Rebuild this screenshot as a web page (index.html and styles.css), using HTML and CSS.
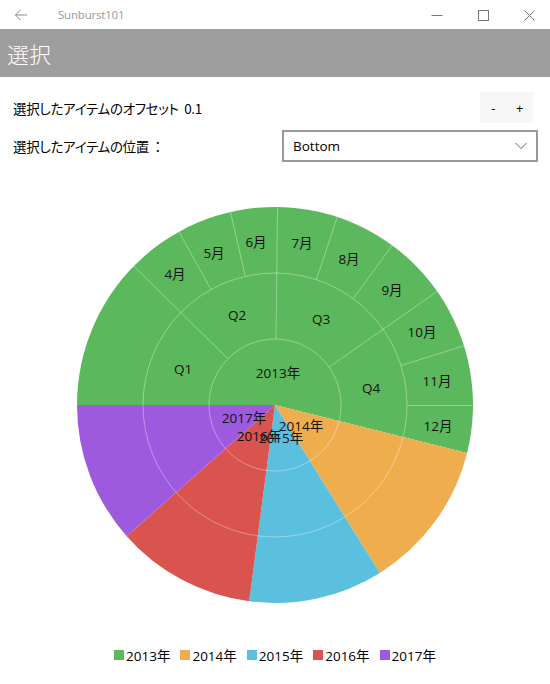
FILE: index.html
```html
<!DOCTYPE html>
<html lang="ja">
<head>
<meta charset="utf-8">
<title>Sunburst101</title>
<link rel="stylesheet" href="styles.css">
</head>
<body>
<div class="app">
  <div class="titlebar">
    <svg class="tb-back" width="14" height="12" viewBox="0 0 14 12"><path d="M13 6H1.5M6.5 1 1.5 6l5 5" fill="none" stroke="#8a8a8a" stroke-width="1"/></svg>
    <span class="tb-title">Sunburst101</span>
    <div class="tb-controls">
      <svg width="12" height="12" viewBox="0 0 12 12"><path d="M0.5 6.5h11" stroke="#777" stroke-width="1"/></svg>
      <svg width="12" height="12" viewBox="0 0 12 12"><rect x="1.5" y="1.5" width="10" height="10" fill="none" stroke="#777" stroke-width="1"/></svg>
      <svg width="12" height="12" viewBox="0 0 12 12"><path d="M1.5 1.5l10 10M11.5 1.5l-10 10" stroke="#777" stroke-width="1"/></svg>
    </div>
  </div>
  <div class="header">選択</div>
  <div class="options">
    <div class="row row-offset">
      <span class="label">選択したアイテムのオフセット&nbsp;&nbsp;0.1</span>
      <div class="stepper"><button class="step">-</button><button class="step">+</button></div>
    </div>
    <div class="row row-pos">
      <span class="label">選択したアイテムの位置<span class="colon">：</span></span>
      <div class="combo">
        <span class="combo-text">Bottom</span>
        <svg class="combo-chev" width="12" height="8" viewBox="0 0 12 8"><path d="M0.5 1 6 6.5 11.5 1" fill="none" stroke="#666" stroke-width="1"/></svg>
      </div>
    </div>
  </div>
  <div class="chart">
    <svg width="550" height="483" viewBox="0 0 550 483">
      <g transform="translate(275 243)">
        <path d="M0 0L-198 0A198 198 0 1 1 192.1 47.9Z" fill="#5cb85c"/>
        <path d="M0 0L192.1 47.9A198 198 0 0 1 104.9 167.9Z" fill="#f0ad4e"/>
        <path d="M0 0L104.9 167.9A198 198 0 0 1 -25.8 196.3Z" fill="#5bc0de"/>
        <path d="M0 0L-25.8 196.3A198 198 0 0 1 -148.3 131.2Z" fill="#d9534f"/>
        <path d="M0 0L-148.3 131.2A198 198 0 0 1 -198 0Z" fill="#9d5ade"/>
        <g class="seps">
          <circle r="66" fill="none"/>
          <circle r="132" fill="none"/>
          <path d="M-47.1 -46.3L-141.2 -138.8"/>
          <path d="M-64 -115.4L-96 -173.2"/>
          <path d="M-29.7 -128.6L-44.5 -192.9"/>
          <path d="M1 -66L2.5 -198"/>
          <path d="M41.4 -125.3L62.2 -188"/>
          <path d="M78.1 -106.4L117.2 -159.6"/>
          <path d="M54.1 -37.9L162.2 -113.6"/>
          <path d="M126 -39.5L188.9 -59.2"/>
          <path d="M132 0.5L197 0.5"/>
        </g>
        <g class="lbl">
          <text x="3" y="-32">2013年</text>
          <text x="-92" y="-36">Q1</text>
          <text x="-38" y="-90">Q2</text>
          <text x="46" y="-86">Q3</text>
          <text x="96" y="-17">Q4</text>
          <text x="-100" y="-131">4月</text>
          <text x="-61" y="-152">5月</text>
          <text x="-19" y="-163">6月</text>
          <text x="27" y="-162">7月</text>
          <text x="74" y="-146">8月</text>
          <text x="117" y="-115">9月</text>
          <text x="147" y="-73">10月</text>
          <text x="162" y="-24">11月</text>
          <text x="163" y="21">12月</text>
          <text x="-31" y="13">2017年</text>
          <text x="26" y="21">2014年</text>
          <text x="-16" y="31">2016年</text>
          <text x="6" y="33">2015年</text>
        </g>
      </g>
    </svg>
  </div>
  <div class="legend">
    <div class="lg-item"><span class="sw sw-2013"></span><span>2013年</span></div>
    <div class="lg-item"><span class="sw sw-2014"></span><span>2014年</span></div>
    <div class="lg-item"><span class="sw sw-2015"></span><span>2015年</span></div>
    <div class="lg-item"><span class="sw sw-2016"></span><span>2016年</span></div>
    <div class="lg-item"><span class="sw sw-2017"></span><span>2017年</span></div>
  </div>
</div>
</body>
</html>
```
FILE: styles.css
```css
* { box-sizing: border-box; }
html, body { margin: 0; padding: 0; background: #fff; }
body {
  width: 550px;
  height: 684px;
  overflow: hidden;
  font-family: "Open Sans", "Noto Sans CJK JP", sans-serif;
  color: #000;
}
.app { display: flex; flex-direction: column; }

.titlebar {
  height: 29px;
  display: flex;
  align-items: center;
}
.tb-back { margin-left: 14px; margin-top: 1px; }
.tb-title {
  margin-left: 30px;
  font-size: 11.5px;
  color: #999;
  letter-spacing: -0.2px;
}
.tb-controls {
  margin-left: auto;
  display: flex;
  gap: 34px;
  margin-right: 15px;
  margin-top: 1px;
}

.header {
  height: 48px;
  background: #9e9e9e;
  color: #fff;
  font-family: "Noto Sans CJK JP", sans-serif;
  font-size: 22px;
  font-weight: 300;
  display: flex;
  align-items: center;
  padding-left: 7px;
}

.options {
  padding: 15px 12px 0 13px;
  display: flex;
  flex-direction: column;
  gap: 7px;
}
.row { display: flex; align-items: center; }
.row-offset { height: 31px; }
.row-pos { height: 32px; }
.label {
  font-family: "Noto Sans CJK JP", sans-serif;
  font-feature-settings: "palt";
  font-size: 13.5px;
  letter-spacing: -0.3px;
}
.colon { font-feature-settings: normal; margin-left: 2px; }
.stepper {
  margin-left: auto;
  margin-right: 5px;
  display: flex;
  background: #f7f7f7;
  height: 31px;
}
.step {
  width: 26.5px;
  border: 0;
  background: transparent;
  font-family: "Open Sans", sans-serif;
  font-size: 13px;
  color: #000;
  padding: 0;
}
.combo {
  margin-left: auto;
  width: 256px;
  height: 32px;
  border: 2px solid #999;
  display: flex;
  align-items: center;
  padding: 0 9px;
}
.combo-text { font-size: 13.5px; }
.combo-chev { margin-left: auto; }

.chart { height: 483px; }
.seps path, .seps circle {
  stroke: rgba(255,255,255,0.35);
  stroke-width: 1;
  fill: none;
}
.lbl text {
  font-family: "Open Sans", "Noto Sans CJK JP", sans-serif;
  font-size: 13.5px;
  text-anchor: middle;
  dominant-baseline: central;
  fill: #111;
}

.legend {
  height: 20px;
  display: flex;
  justify-content: center;
  align-items: center;
  gap: 10px;
  font-size: 13.5px;
}
.lg-item { display: flex; align-items: center; gap: 2px; }
.sw { width: 10px; height: 10px; display: inline-block; }
.sw-2013 { background: #5cb85c; }
.sw-2014 { background: #f0ad4e; }
.sw-2015 { background: #5bc0de; }
.sw-2016 { background: #d9534f; }
.sw-2017 { background: #9d5ade; }
```
